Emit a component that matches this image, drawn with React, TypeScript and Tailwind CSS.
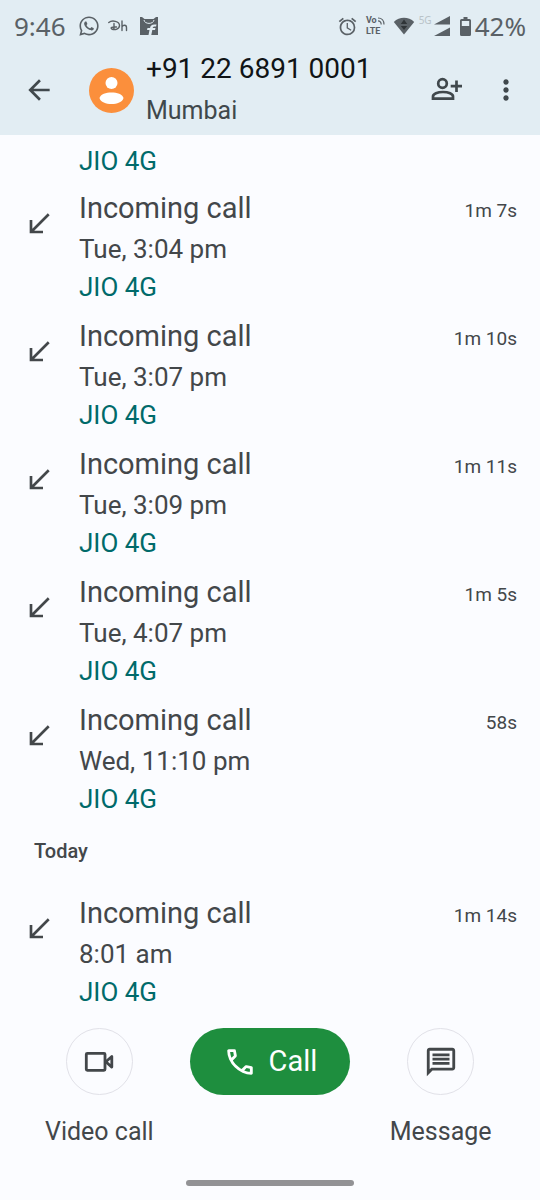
import React from 'react';
import { FaWhatsapp } from 'react-icons/fa';
import { MdAlarm, MdArrowBack, MdCallReceived, MdMoreVert, MdOutlineMessage } from 'react-icons/md';

type Call = {
    time: string;
    duration: string;
};

const earlierCalls: Call[] = [
    { time: 'Tue, 3:04 pm', duration: '1m 7s' },
    { time: 'Tue, 3:07 pm', duration: '1m 10s' },
    { time: 'Tue, 3:09 pm', duration: '1m 11s' },
    { time: 'Tue, 4:07 pm', duration: '1m 5s' },
    { time: 'Wed, 11:10 pm', duration: '58s' },
];

const todayCalls: Call[] = [{ time: '8:01 am', duration: '1m 14s' }];

const StatusBar = () => (
    <div className="flex h-12 items-center justify-between px-[14px] pt-1 font-['Noto_Sans',sans-serif] text-[26px] leading-8 text-[#5a6166]">
        <div className="flex items-center">
            <span>9:46</span>
            <FaWhatsapp className="ml-3 h-[22px] w-[22px]" />
            {/* Hotstar */}
            <svg className="ml-2 h-4 w-5" viewBox="0 0 20 16" fill="none" stroke="currentColor" strokeWidth="1.4" strokeLinecap="round">
                <path d="M.8 4.500C4 1.800 11.500 3.200 11.500 7.500 11.500 11 7 12.500 3.800 11 2 9.800 4 8.500 8.500 9M6 5.500V11.500" />
                <path d="M14 3V12.500M14 9C15 6.500 18.500 6.500 18.500 9.500V12.500" />
            </svg>
            {/* Flipkart */}
            <svg className="ml-[11px] h-5 w-5" viewBox="0 0 20 20" fill="none">
                <path d="M1 1H3L5.500 3H14.500L17 1H19V19H1Z" fill="currentColor" />
                <path d="M5 4C5.500 8.500 14.500 8.500 15 4" stroke="#e2edf3" strokeWidth="1" />
                <path d="M17.500 8.500H15.500C12.500 8.500 11.500 10 11 12H8.500L8 14H10.500L9.500 19H12.300L13.300 14H16L16.500 12H13.700C14 11 14.500 10.500 15.500 10.500H17Z" fill="#e2edf3" />
            </svg>
        </div>
        <div className="flex items-center">
            <MdAlarm className="h-[21px] w-[21px]" />
            <div className="ml-2 font-[Roboto,sans-serif] text-[9px] leading-[11px] font-bold">
                <div className="flex items-center">
                    Vo
                    <svg className="h-2 w-2" viewBox="0 0 8 8" fill="none" stroke="currentColor" strokeWidth="1.2">
                        <path d="M1 1C5 1 7 4 7 7.500M1 3.800C3 3.800 4.200 5.500 4.200 7.500" />
                    </svg>
                </div>
                <div>LTE</div>
            </div>
            <svg className="ml-2 h-[18px] w-[22px]" viewBox="0 0 22 18">
                <path d="M11 17.500L.8 5C6.500-.6 15.500-.6 21.200 5Z" fill="currentColor" />
                <path d="M11 2.500L14.200 7H7.800ZM11 13L7.800 9H14.200Z" fill="#303538" />
            </svg>
            <span className="ml-1 self-start text-[10px] leading-5 text-[#b9c3c8]">5G</span>
            <svg className="ml-0.5 h-5 w-4" viewBox="0 0 16 20" fill="currentColor">
                <path d="M16 0V8.500H0ZM16 11.500V20H0Z" />
            </svg>
            <svg className="ml-2.5 h-[19px] w-[11px]" viewBox="0 0 11 19">
                <path d="M3.500 0H7.500V2H9.500Q11 2 11 3.500V17.500Q11 19 9.500 19H1.500Q0 19 0 17.500V3.500Q0 2 1.500 2H3.500ZM1.800 4V9H9.200V4Z" fill="currentColor" fillRule="evenodd" />
            </svg>
            <span className="ml-1">42%</span>
        </div>
    </div>
);

const Header = () => (
    <header className="bg-[#e2edf3] pb-[3px]">
        <StatusBar />
        <div className="flex h-[84px] items-center pr-[18px] pl-[23px] text-[#40484c]">
            <button aria-label="Back">
                <MdArrowBack className="h-8 w-8" />
            </button>
            <svg className="ml-[34px] h-[45px] w-[45px] shrink-0" viewBox="0 0 45 45">
                <circle cx="22.500" cy="22.500" r="22.500" fill="#fb8f3c" />
                <circle cx="22.500" cy="15" r="6" fill="#fff" />
                <path d="M10.500 30C12.500 22.800 32.500 22.800 34.500 30 32.500 38 12.500 38 10.500 30Z" fill="#fff" />
            </svg>
            <div className="ml-3 flex-1 whitespace-nowrap">
                <h1 className="text-[28px] leading-[42px] text-[#101416]">+91 22 6891 0001</h1>
                <p className="text-[25px] leading-[42px]">Mumbai</p>
            </div>
            <button aria-label="Add contact">
                <svg className="h-8 w-8" viewBox="0 0 32 32" fill="none" stroke="currentColor" strokeWidth="2.700">
                    <circle cx="12.500" cy="9.500" r="4.300" />
                    <path d="M3 24.700V22.500C3 20 7.500 18 13 18S23 20 23 22.500V24.700ZM26.500 6.500V18M20.700 12.200H32" />
                </svg>
            </button>
            <button aria-label="More options" className="ml-7">
                <MdMoreVert className="h-8 w-8" />
            </button>
        </div>
    </header>
);

const CallRow = ({ time, duration }: Call) => (
    <li className="flex px-[23px]">
        <MdCallReceived className="mt-[21px] h-8 w-8 shrink-0" />
        <div className="ml-6 flex-1">
            <div className="text-[29px] leading-[42px]">Incoming call</div>
            <div className="text-[26px] leading-[41px]">{time}</div>
            <div className="text-[26px] leading-[35px] text-[#006a6a]">JIO 4G</div>
        </div>
        <div className="mt-1 text-[19px] leading-10">{duration}</div>
    </li>
);

const Footer = () => (
    <footer className="mt-auto">
        <div className="grid grid-cols-3 items-start justify-items-center px-[14px] pt-2">
            <button className="flex flex-col items-center gap-[17px]">
                <span className="flex h-[67px] w-[67px] items-center justify-center rounded-full border border-[#e1e1e8]">
                    <svg className="h-8 w-8" viewBox="0 0 32 32" fill="none" stroke="currentColor" strokeWidth="2.800" strokeLinejoin="round">
                        <rect x="3.300" y="7.300" width="18.700" height="17" rx="1" />
                        <path d="M22.800 15.800L28.800 10.500V21.100Z" />
                    </svg>
                </span>
                <span className="text-[25px] leading-10">Video call</span>
            </button>
            <button className="flex h-[67px] w-40 items-center justify-center gap-3 rounded-full bg-[#1e8e3e] text-[29px] text-white">
                <svg className="h-[34px] w-[34px]" viewBox="0 0 24 24" fill="currentColor">
                    <path d="M19.950 21q-3.125 0-6.175-1.362t-5.550-3.863-3.862-5.550T3 4.050q0-.45.3-.75t.75-.3H8.100q.35 0 .625.238t.325.562l.65 3.500q.05.4-.025.675T9.400 8.450L6.975 10.900q.5.925 1.187 1.787t1.513 1.663q.775.775 1.625 1.438T13.100 17l2.350-2.350q.225-.225.588-.337t.712-.063l3.450.7q.35.1.575.363T21 15.900v4.050q0 .45-.3.75t-.75.3M6.025 9l1.650-1.650L7.250 5H5.025q.125 1.025.35 2.025T6.025 9m8.950 8.950q.975.425 1.988.675T19 18.950v-2.200l-2.350-.475z" />
                </svg>
                Call
            </button>
            <button className="flex flex-col items-center gap-[17px]">
                <span className="flex h-[67px] w-[67px] items-center justify-center rounded-full border border-[#e1e1e8]">
                    <MdOutlineMessage className="h-[34px] w-[34px]" />
                </span>
                <span className="text-[25px] leading-10">Message</span>
            </button>
        </div>
        <div className="mx-auto mt-7 mb-[14px] h-1.5 w-[168px] rounded-full bg-[#929295]" />
    </footer>
);

const App = () => {
    return (
        <div className="flex min-h-screen flex-col bg-[#fbfcff] font-[Roboto,sans-serif] text-[#43474a]">
            <Header />
            <main className="pt-[9px]">
                <p className="mb-[9px] pl-[79px] text-[26px] leading-[34px] text-[#006a6a]">JIO 4G</p>
                <ul className="flex flex-col gap-[10px]">
                    {earlierCalls.map((call) => (
                        <CallRow key={call.time} {...call} />
                    ))}
                </ul>
                <h2 className="pt-[14px] pb-[21px] pl-[34px] text-[20px] leading-10 font-medium">Today</h2>
                <ul>
                    {todayCalls.map((call) => (
                        <CallRow key={call.time} {...call} />
                    ))}
                </ul>
            </main>
            <Footer />
        </div>
    );
};

export default App;
